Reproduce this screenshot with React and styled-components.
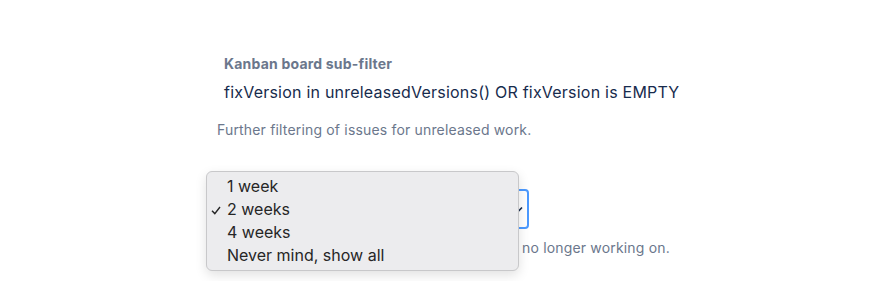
import React from "react";
import styled, { createGlobalStyle } from "styled-components";

const Global = createGlobalStyle`
  body {
    margin: 0;
    background: #fff;
    font-family: Inter, "Liberation Sans", Arial, sans-serif;
  }
`;

const Page = styled.div`
  width: 894px;
  height: 281px;
  overflow: hidden;
  padding: 54px 0 0 217px;
  box-sizing: border-box;
`;

const Field = styled.div`
  display: flex;
  flex-direction: column;
`;

const Label = styled.div`
  padding-left: 7px;
  font-size: 14px;
  line-height: 20px;
  font-weight: 700;
  letter-spacing: 0.2px;
  color: #6b778c;
`;

const Query = styled.div`
  padding-left: 7px;
  margin-top: 8px;
  font-size: 16px;
  line-height: 20px;
  letter-spacing: 0.22px;
  color: #172b4d;
`;

const Help = styled.div`
  margin-top: ${p => p.gap}px;
  font-size: 14px;
  line-height: 20px;
  letter-spacing: 0.17px;
  color: #6b778c;
`;

const SelectWrap = styled.div`
  position: relative;
  margin-top: 49px;
  width: 312px;
`;

const SelectBox = styled.div`
  height: 40px;
  box-sizing: border-box;
  border: 2px solid #4c9aff;
  border-radius: 4px;
  display: flex;
  align-items: center;
  justify-content: flex-end;
  padding-right: 3px;
  color: #172b4d;
`;

const Menu = styled.ul`
  position: absolute;
  left: -11px;
  top: -18px;
  width: 313px;
  height: 100px;
  box-sizing: border-box;
  margin: 0;
  padding: 3px 0;
  list-style: none;
  background: #ececee;
  border: 1px solid #c8c8ca;
  border-radius: 6px;
  box-shadow: 0 4px 12px rgba(0, 0, 0, 0.12);
`;

const Item = styled.li`
  position: relative;
  height: 23px;
  line-height: 23px;
  padding-left: 20px;
  font-size: 16px;
  color: #262626;
`;

const Check = styled.svg`
  position: absolute;
  left: 4px;
  top: 8px;
`;

const options = ["1 week", "2 weeks", "4 weeks", "Never mind, show all"];

export default function App() {
  return (
    <>
      <Global />
      <Page>
        <Field>
          <Label>Kanban board sub-filter</Label>
          <Query>fixVersion in unreleasedVersions() OR fixVersion is EMPTY</Query>
          <Help gap={18}>Further filtering of issues for unreleased work.</Help>
        </Field>
        <Field>
          <SelectWrap>
            <SelectBox>
              <svg width="10" height="10" viewBox="0 0 10 10">
                <path d="M2 3.5 L5 6.5 L8 3.5" fill="none" stroke="#172b4d" strokeWidth="1.6" />
              </svg>
            </SelectBox>
            <Menu>
              {options.map((o, i) => (
                <Item key={o}>
                  {i === 1 && (
                    <Check width="10" height="9" viewBox="0 0 10 9">
                      <path d="M1 4.8 L3.8 7.6 L9 1" fill="none" stroke="#262626" strokeWidth="1.4" />
                    </Check>
                  )}
                  {o}
                </Item>
              ))}
            </Menu>
          </SelectWrap>
          <Help gap={9}>Excludes completed issues that your team is no longer working on.</Help>
        </Field>
      </Page>
    </>
  );
}
